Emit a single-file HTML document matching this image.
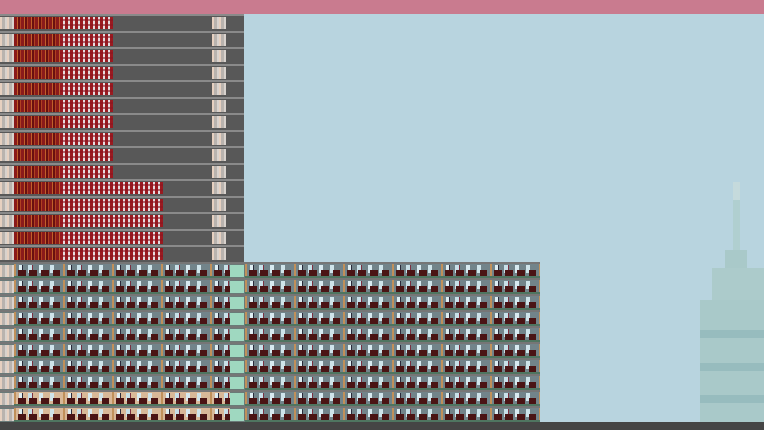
<!DOCTYPE html>
<html><head><style>
*{margin:0;padding:0}
body{width:764px;height:430px;overflow:hidden;background:#b8d4df;position:relative;font-family:"Liberation Sans",sans-serif}
.a{position:absolute}
.top{left:0;top:0;width:764px;height:14px;background:#c97b8f}
.bot{left:0;top:422px;width:764px;height:8px;background:#454545}
.ur{left:0;width:244px;height:16.5px;background:#585858;border-top:2px solid #8a8a8a;box-sizing:border-box}
.el{top:1px;height:12px;width:14px;background:repeating-linear-gradient(90deg,#e6d0c0 0 2px,#b9b3ae 2px 5px,#d8d2cd 5px 7px)}
.red1{top:1px;left:14px;width:46px;height:12px;background:repeating-linear-gradient(90deg,#8a1a1a 0 3px,#c0602a 3px 4px,#6a1010 4px 6px,#b04020 6px 7px)}
.red2{top:1px;left:60px;height:12px;background:repeating-linear-gradient(90deg,#9a1a20 0 3px,#e8dce0 3px 5px),#9a1a20}
.red2:after{content:"";position:absolute;inset:0;background:repeating-linear-gradient(0deg,transparent 0 3px,rgba(140,20,30,.6) 3px 5px)}
.lr{left:0;width:540px;height:16px;background:#6a7a78;border-top:2px solid #767676;box-sizing:border-box}
.off{top:0;left:14px;width:216px;height:14px;background:
 linear-gradient(0deg,#4f7560 0 2px,transparent 2px),
 repeating-linear-gradient(90deg,#c0905a 0 2px,transparent 2px 49px),
 repeating-linear-gradient(90deg,transparent 0 4px,#4a1414 4px 12px,transparent 12px 15px,#4a1414 15px 23px,transparent 23px 27px,#4a1414 27px 35px,transparent 35px 39px,#4a1414 39px 46px,transparent 46px 49px) 0 6px/100% 6px no-repeat,
 repeating-linear-gradient(90deg,transparent 0 5px,#dfeef2 5px 8px,#2a2a3a 8px 9px,transparent 9px 14px,#c8e0e8 14px 18px,#7a3040 18px 19px,transparent 19px 25px,#d8eaf0 25px 29px,transparent 29px 36px,#cfe4ea 36px 40px,transparent 40px 49px) 0 1px/100% 8px no-repeat,
 #72848a}
.off2{left:245px;width:295px}
.tw{background:#a9c9c9}
</style></head><body>
<div class="a top"></div>

<div class="a" style="left:733px;top:182px;width:7px;height:18px;background:#c5dadc"></div>
<div class="a" style="left:733px;top:200px;width:7px;height:52px;background:#b0cfd0"></div>
<div class="a tw" style="left:725px;top:250px;width:22px;height:30px"></div>
<div class="a tw" style="left:712px;top:268px;width:52px;height:36px;background:#accbcb"></div>
<div class="a tw" style="left:700px;top:300px;width:64px;height:122px"></div>
<div class="a" style="left:700px;top:330px;width:64px;height:8px;background:#97bcbe"></div>
<div class="a" style="left:700px;top:363px;width:64px;height:8px;background:#97bcbe"></div>
<div class="a" style="left:700px;top:395px;width:64px;height:8px;background:#97bcbe"></div>

<div class="a bot"></div>
<div class="a" style="left:0;top:0">
<div class="a ur" style="top:14px"><div class="a el" style="left:0"></div><div class="a red1"></div><div class="a red2" style="width:53px"></div><div class="a el" style="left:212px"></div></div>
<div class="a ur" style="top:30.5px"><div class="a el" style="left:0"></div><div class="a red1"></div><div class="a red2" style="width:53px"></div><div class="a el" style="left:212px"></div></div>
<div class="a ur" style="top:47px"><div class="a el" style="left:0"></div><div class="a red1"></div><div class="a red2" style="width:53px"></div><div class="a el" style="left:212px"></div></div>
<div class="a ur" style="top:63.5px"><div class="a el" style="left:0"></div><div class="a red1"></div><div class="a red2" style="width:53px"></div><div class="a el" style="left:212px"></div></div>
<div class="a ur" style="top:80px"><div class="a el" style="left:0"></div><div class="a red1"></div><div class="a red2" style="width:53px"></div><div class="a el" style="left:212px"></div></div>
<div class="a ur" style="top:96.5px"><div class="a el" style="left:0"></div><div class="a red1"></div><div class="a red2" style="width:53px"></div><div class="a el" style="left:212px"></div></div>
<div class="a ur" style="top:113px"><div class="a el" style="left:0"></div><div class="a red1"></div><div class="a red2" style="width:53px"></div><div class="a el" style="left:212px"></div></div>
<div class="a ur" style="top:129.5px"><div class="a el" style="left:0"></div><div class="a red1"></div><div class="a red2" style="width:53px"></div><div class="a el" style="left:212px"></div></div>
<div class="a ur" style="top:146px"><div class="a el" style="left:0"></div><div class="a red1"></div><div class="a red2" style="width:53px"></div><div class="a el" style="left:212px"></div></div>
<div class="a ur" style="top:162.5px"><div class="a el" style="left:0"></div><div class="a red1"></div><div class="a red2" style="width:53px"></div><div class="a el" style="left:212px"></div></div>
<div class="a ur" style="top:179px"><div class="a el" style="left:0"></div><div class="a red1"></div><div class="a red2" style="width:103px"></div><div class="a el" style="left:212px"></div></div>
<div class="a ur" style="top:195.5px"><div class="a el" style="left:0"></div><div class="a red1"></div><div class="a red2" style="width:103px"></div><div class="a el" style="left:212px"></div></div>
<div class="a ur" style="top:212px"><div class="a el" style="left:0"></div><div class="a red1"></div><div class="a red2" style="width:103px"></div><div class="a el" style="left:212px"></div></div>
<div class="a ur" style="top:228.5px"><div class="a el" style="left:0"></div><div class="a red1"></div><div class="a red2" style="width:103px"></div><div class="a el" style="left:212px"></div></div>
<div class="a ur" style="top:245px"><div class="a el" style="left:0"></div><div class="a red1"></div><div class="a red2" style="width:103px"></div><div class="a el" style="left:212px"></div></div>
<div class="a lr" style="top:262px"><div class="a el" style="left:0"></div><div class="a off"></div><div class="a el" style="left:230px;background:#9fd8c0"></div><div class="a off off2"></div></div>
<div class="a lr" style="top:278px"><div class="a el" style="left:0"></div><div class="a off"></div><div class="a el" style="left:230px;background:#9fd8c0"></div><div class="a off off2"></div></div>
<div class="a lr" style="top:294px"><div class="a el" style="left:0"></div><div class="a off"></div><div class="a el" style="left:230px;background:#9fd8c0"></div><div class="a off off2"></div></div>
<div class="a lr" style="top:310px"><div class="a el" style="left:0"></div><div class="a off"></div><div class="a el" style="left:230px;background:#9fd8c0"></div><div class="a off off2"></div></div>
<div class="a lr" style="top:326px"><div class="a el" style="left:0"></div><div class="a off"></div><div class="a el" style="left:230px;background:#9fd8c0"></div><div class="a off off2"></div></div>
<div class="a lr" style="top:342px"><div class="a el" style="left:0"></div><div class="a off"></div><div class="a el" style="left:230px;background:#9fd8c0"></div><div class="a off off2"></div></div>
<div class="a lr" style="top:358px"><div class="a el" style="left:0"></div><div class="a off"></div><div class="a el" style="left:230px;background:#9fd8c0"></div><div class="a off off2"></div></div>
<div class="a lr" style="top:374px"><div class="a el" style="left:0"></div><div class="a off"></div><div class="a el" style="left:230px;background:#9fd8c0"></div><div class="a off off2"></div></div>
<div class="a lr" style="top:390px"><div class="a el" style="left:0"></div><div class="a off" style="background-color:#d8b898"></div><div class="a el" style="left:230px;background:#9fd8c0"></div><div class="a off off2"></div></div>
<div class="a lr" style="top:406px"><div class="a el" style="left:0"></div><div class="a off" style="background-color:#d8b898"></div><div class="a el" style="left:230px;background:#9fd8c0"></div><div class="a off off2"></div></div>
</div>
</body></html>
